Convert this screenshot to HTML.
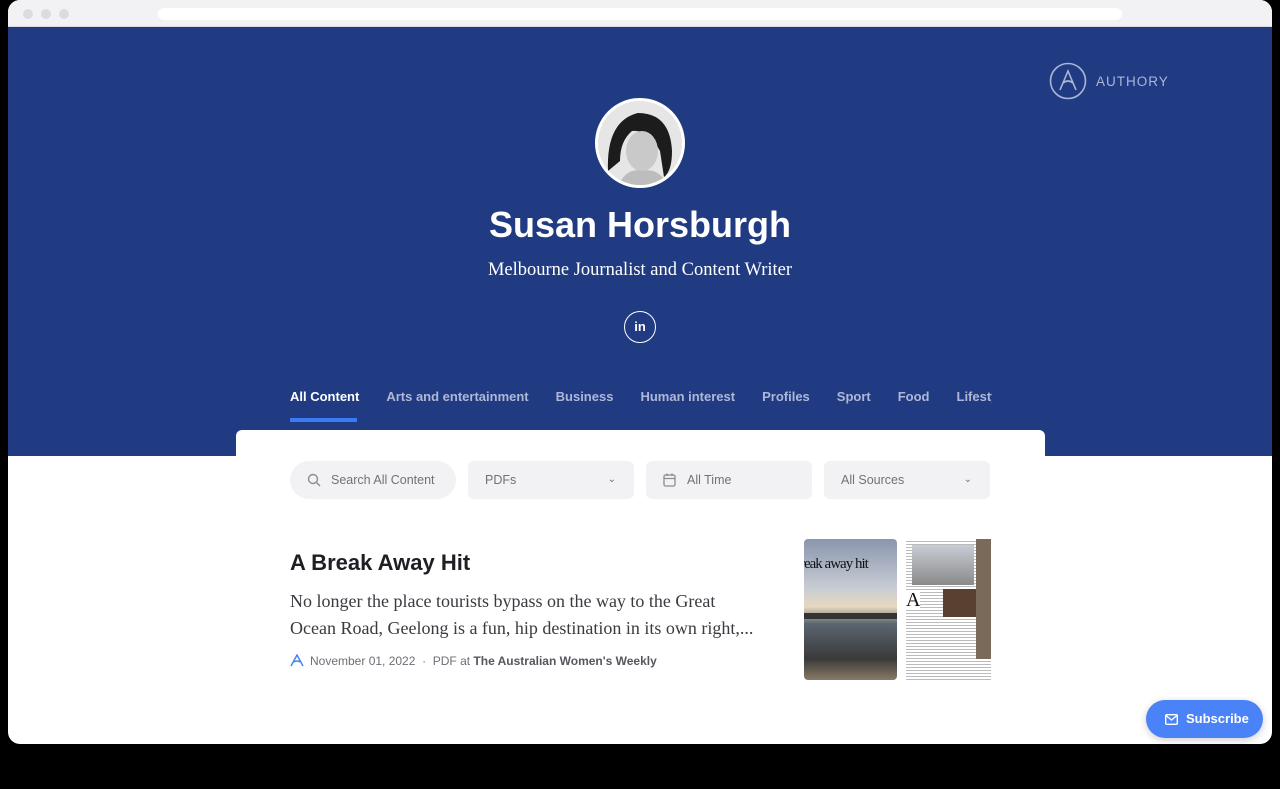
<!DOCTYPE html>
<html><head><meta charset="utf-8"><style>
*{margin:0;padding:0;box-sizing:border-box}
body{width:1280px;height:789px;background:#000;font-family:"Liberation Sans",sans-serif;position:relative;overflow:hidden}
.win{position:absolute;left:8px;top:0;width:1264px;height:744px;background:#fff;border-radius:12px;overflow:hidden}
.bar{height:27px;background:#f2f2f4;border-bottom:1px solid #d8d8de;position:relative}
.dot{position:absolute;top:9px;width:10px;height:10px;border-radius:50%;background:#dcdce0}
.url{position:absolute;left:150px;top:8px;width:964px;height:12px;background:#fff;border-radius:6px}
.hero{position:absolute;top:27px;left:0;width:1264px;height:429px;background:#213b82}
.logo{position:absolute;left:1041px;top:35px;display:flex;align-items:center;color:#aab6d6;font-size:13.5px;letter-spacing:1px}
.avatar{position:absolute;left:587px;top:98px;width:90px;height:90px;border-radius:50%;border:3px solid #fff;overflow:hidden;background:#e8e8e8}
h1{position:absolute;top:204px;left:0;width:1264px;text-align:center;color:#fff;font-size:36px;font-weight:bold}
.sub{position:absolute;top:260px;width:1264px;text-align:center;color:#fff;font-family:"Liberation Serif",serif;font-size:18.5px}
.li{position:absolute;left:616px;top:311px;width:32px;height:32px;border:1.5px solid #fff;border-radius:50%;color:#fff;font-weight:bold;font-size:13px;text-align:center;line-height:29px}
.tabs{position:absolute;top:389px;left:282px;width:702px;overflow:hidden;white-space:nowrap;font-size:13px;font-weight:bold;color:#aeb8d6}
.tabs span{margin-right:27px}
.tabs span.a{color:#fff}
.ul{position:absolute;left:282px;top:418px;width:67px;height:4px;background:#3d7bf5}
.card{position:absolute;left:228px;top:430px;width:809px;height:320px;background:#fff;border-radius:6px 6px 0 0}
.f{position:absolute;top:461px;height:38px;background:#f2f2f4;border-radius:6px;font-size:12.5px;color:#70717a;line-height:38px}
.title{position:absolute;left:282px;top:550px;font-size:22px;font-weight:bold;color:#1e1e24}
.desc{position:absolute;left:282px;top:588px;width:485px;font-family:"Liberation Serif",serif;font-size:18px;line-height:27px;color:#3a3a40;white-space:nowrap}
.meta{position:absolute;left:282px;top:654px;font-size:12px;color:#6e6e76}
.sbtn{position:absolute;left:1138px;top:700px;width:117px;height:38px;border-radius:19px;background:#4a82f7;color:#fff;font-weight:bold;font-size:13px;line-height:38px;box-shadow:0 2px 8px rgba(0,0,0,.2)}
</style></head><body>
<div class="win">
<div class="bar"><div class="dot" style="left:15px"></div><div class="dot" style="left:33px"></div><div class="dot" style="left:51px"></div><div class="url"></div></div>
<div class="hero">
<div class="logo"><svg width="38" height="38" viewBox="0 0 38 38" fill="none" stroke="#aab6d6" stroke-width="1.6"><circle cx="19" cy="19" r="17.5"/><path d="M11 28 L19 9 L27 28 M14 21 Q19 17 24 21"/></svg><span style="margin-left:9px">AUTHORY</span></div>
</div>
<div class="avatar"><svg width="84" height="84" viewBox="0 0 84 84"><rect width="84" height="84" fill="#e6e6e6"/><path d="M10 70 Q8 20 40 12 Q72 12 74 50 Q74 70 66 76 L62 50 Q50 28 34 30 Q22 40 22 60 Z" fill="#1c1c1c"/><ellipse cx="44" cy="50" rx="16" ry="20" fill="#c9c9c9"/><path d="M20 84 Q30 66 44 70 Q60 66 70 84Z" fill="#bdbdbd"/></svg></div>
<h1>Susan Horsburgh</h1>
<div class="sub">Melbourne Journalist and Content Writer</div>
<div class="li">in</div>
<div class="tabs"><span class="a">All Content</span><span>Arts and entertainment</span><span>Business</span><span>Human interest</span><span>Profiles</span><span>Sport</span><span>Food</span><span>Lifestyle</span></div>
<div class="ul"></div>
<div class="card"></div>
<div class="f" style="left:282px;width:166px;border-radius:19px;padding-left:41px"><svg style="position:absolute;left:17px;top:12px" width="14" height="14" viewBox="0 0 14 14" fill="none" stroke="#8a8b93" stroke-width="1.4"><circle cx="6" cy="6" r="4.5"/><path d="M9.5 9.5 L13 13"/></svg>Search All Content</div>
<div class="f" style="left:460px;width:166px;padding-left:17px">PDFs<span style="position:absolute;right:18px;top:0;font-size:10px">&#8964;</span></div>
<div class="f" style="left:638px;width:166px;padding-left:41px"><svg style="position:absolute;left:17px;top:12px" width="13" height="14" viewBox="0 0 13 14" fill="none" stroke="#8a8b93" stroke-width="1.3"><rect x="1" y="2" width="11" height="11" rx="1.5"/><path d="M1 5.5 H12 M4 0.5 V3 M9 0.5 V3"/></svg>All Time</div>
<div class="f" style="left:816px;width:166px;padding-left:17px">All Sources<span style="position:absolute;right:18px;top:0;font-size:10px">&#8964;</span></div>
<div class="title">A Break Away Hit</div>
<div class="desc">No longer the place tourists bypass on the way to the Great<br>Ocean Road, Geelong is a fun, hip destination in its own right,...</div>
<div class="meta"><svg width="14" height="13" viewBox="0 0 14 13" fill="none" stroke="#4a82f7" stroke-width="1.5" style="vertical-align:-2px;margin-right:6px"><path d="M1 12 L7 1 L13 12 M4 8 Q7 6 10 8"/></svg>November 01, 2022 &nbsp;·&nbsp; PDF at <b style="color:#55565e">The Australian Women's Weekly</b></div>
<div style="position:absolute;left:796px;top:539px;width:93px;height:141px;border-radius:4px;overflow:hidden;background:linear-gradient(#8a96ad 0%,#c8ccd4 35%,#e8d8c0 48%,#5b6670 60%,#3a3a3a 85%,#8a7a66 100%)"><div style="position:absolute;top:17px;left:-4px;font-family:'Liberation Serif',serif;font-size:15px;color:#111;letter-spacing:-1px">reak away hit</div><div style="position:absolute;top:74px;left:0;width:93px;height:6px;background:#333"></div></div>
<div style="position:absolute;left:898px;top:539px;width:85px;height:141px;background:repeating-linear-gradient(#fff 0 2px,#bbb 2px 3px)"><div style="position:absolute;left:6px;top:6px;width:62px;height:40px;background:linear-gradient(#c8ccd4,#8a8a8a)"></div><div style="position:absolute;left:37px;top:50px;width:37px;height:28px;background:#5a4030"></div><div style="position:absolute;left:70px;top:0;width:15px;height:120px;background:#7a6a5a"></div><div style="position:absolute;left:0;top:52px;font-family:'Liberation Serif',serif;font-size:20px;color:#111;background:#fff;line-height:18px">A</div></div>
<div class="sbtn"><svg width="13" height="11" viewBox="0 0 13 11" fill="none" stroke="#fff" stroke-width="1.4" style="position:absolute;left:19px;top:14px"><rect x="0.7" y="0.7" width="11.6" height="9.6" rx="1"/><path d="M1 1.5 L6.5 6 L12 1.5"/></svg><span style="position:absolute;left:40px">Subscribe</span></div>
</div>
</body></html>
